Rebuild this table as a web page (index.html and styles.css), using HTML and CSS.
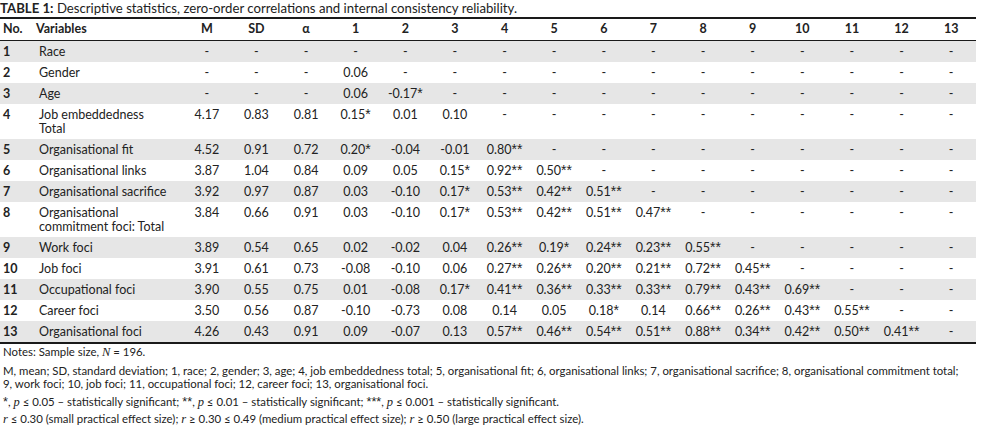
FILE: index.html
```html
<!DOCTYPE html>
<html lang="en">
<head>
<meta charset="utf-8">
<title>Table 1</title>
<link rel="stylesheet" href="styles.css">
</head>
<body>
<div class="page">
  <p class="caption"><b>TABLE 1:</b> Descriptive statistics, zero-order correlations and internal consistency reliability.</p>
  <table class="stats">
    <colgroup>
      <col class="c-no"><col class="c-var">
      <col class="c-num"><col class="c-num"><col class="c-num">
      <col class="c-num"><col class="c-num"><col class="c-num"><col class="c-num"><col class="c-num"><col class="c-num"><col class="c-num"><col class="c-num"><col class="c-num"><col class="c-num"><col class="c-num"><col class="c-num"><col class="c-num">
    </colgroup>
    <thead>
      <tr><th class="l">No.</th><th class="l">Variables</th><th>M</th><th>SD</th><th>α</th><th>1</th><th>2</th><th>3</th><th>4</th><th>5</th><th>6</th><th>7</th><th>8</th><th>9</th><th>10</th><th>11</th><th>12</th><th>13</th></tr>
    </thead>
    <tbody>
      <tr class="sh"><td class="no">1</td><td class="var">Race</td><td>-</td><td>-</td><td>-</td><td>-</td><td>-</td><td>-</td><td>-</td><td>-</td><td>-</td><td>-</td><td>-</td><td>-</td><td>-</td><td>-</td><td>-</td><td>-</td></tr>
      <tr><td class="no">2</td><td class="var">Gender</td><td>-</td><td>-</td><td>-</td><td>0.06</td><td>-</td><td>-</td><td>-</td><td>-</td><td>-</td><td>-</td><td>-</td><td>-</td><td>-</td><td>-</td><td>-</td><td>-</td></tr>
      <tr class="sh"><td class="no">3</td><td class="var">Age</td><td>-</td><td>-</td><td>-</td><td>0.06</td><td>-0.17<span class="s">*</span></td><td>-</td><td>-</td><td>-</td><td>-</td><td>-</td><td>-</td><td>-</td><td>-</td><td>-</td><td>-</td><td>-</td></tr>
      <tr><td class="no">4</td><td class="var">Job embeddedness<br>Total</td><td>4.17</td><td>0.83</td><td>0.81</td><td>0.15<span class="s">*</span></td><td>0.01</td><td>0.10</td><td>-</td><td>-</td><td>-</td><td>-</td><td>-</td><td>-</td><td>-</td><td>-</td><td>-</td><td>-</td></tr>
      <tr class="sh"><td class="no">5</td><td class="var">Organisational fit</td><td>4.52</td><td>0.91</td><td>0.72</td><td>0.20<span class="s">*</span></td><td>-0.04</td><td>-0.01</td><td>0.80<span class="s">**</span></td><td>-</td><td>-</td><td>-</td><td>-</td><td>-</td><td>-</td><td>-</td><td>-</td><td>-</td></tr>
      <tr><td class="no">6</td><td class="var">Organisational links</td><td>3.87</td><td>1.04</td><td>0.84</td><td>0.09</td><td>0.05</td><td>0.15<span class="s">*</span></td><td>0.92<span class="s">**</span></td><td>0.50<span class="s">**</span></td><td>-</td><td>-</td><td>-</td><td>-</td><td>-</td><td>-</td><td>-</td><td>-</td></tr>
      <tr class="sh"><td class="no">7</td><td class="var">Organisational sacrifice</td><td>3.92</td><td>0.97</td><td>0.87</td><td>0.03</td><td>-0.10</td><td>0.17<span class="s">*</span></td><td>0.53<span class="s">**</span></td><td>0.42<span class="s">**</span></td><td>0.51<span class="s">**</span></td><td>-</td><td>-</td><td>-</td><td>-</td><td>-</td><td>-</td><td>-</td></tr>
      <tr><td class="no">8</td><td class="var">Organisational<br>commitment foci: Total</td><td>3.84</td><td>0.66</td><td>0.91</td><td>0.03</td><td>-0.10</td><td>0.17<span class="s">*</span></td><td>0.53<span class="s">**</span></td><td>0.42<span class="s">**</span></td><td>0.51<span class="s">**</span></td><td>0.47<span class="s">**</span></td><td>-</td><td>-</td><td>-</td><td>-</td><td>-</td><td>-</td></tr>
      <tr class="sh"><td class="no">9</td><td class="var">Work foci</td><td>3.89</td><td>0.54</td><td>0.65</td><td>0.02</td><td>-0.02</td><td>0.04</td><td>0.26<span class="s">**</span></td><td>0.19<span class="s">*</span></td><td>0.24<span class="s">**</span></td><td>0.23<span class="s">**</span></td><td>0.55<span class="s">**</span></td><td>-</td><td>-</td><td>-</td><td>-</td><td>-</td></tr>
      <tr><td class="no">10</td><td class="var">Job foci</td><td>3.91</td><td>0.61</td><td>0.73</td><td>-0.08</td><td>-0.10</td><td>0.06</td><td>0.27<span class="s">**</span></td><td>0.26<span class="s">**</span></td><td>0.20<span class="s">**</span></td><td>0.21<span class="s">**</span></td><td>0.72<span class="s">**</span></td><td>0.45<span class="s">**</span></td><td>-</td><td>-</td><td>-</td><td>-</td></tr>
      <tr class="sh"><td class="no">11</td><td class="var">Occupational foci</td><td>3.90</td><td>0.55</td><td>0.75</td><td>0.01</td><td>-0.08</td><td>0.17<span class="s">*</span></td><td>0.41<span class="s">**</span></td><td>0.36<span class="s">**</span></td><td>0.33<span class="s">**</span></td><td>0.33<span class="s">**</span></td><td>0.79<span class="s">**</span></td><td>0.43<span class="s">**</span></td><td>0.69<span class="s">**</span></td><td>-</td><td>-</td><td>-</td></tr>
      <tr><td class="no">12</td><td class="var">Career foci</td><td>3.50</td><td>0.56</td><td>0.87</td><td>-0.10</td><td>-0.73</td><td>0.08</td><td>0.14</td><td>0.05</td><td>0.18<span class="s">*</span></td><td>0.14</td><td>0.66<span class="s">**</span></td><td>0.26<span class="s">**</span></td><td>0.43<span class="s">**</span></td><td>0.55<span class="s">**</span></td><td>-</td><td>-</td></tr>
      <tr class="sh"><td class="no">13</td><td class="var">Organisational foci</td><td>4.26</td><td>0.43</td><td>0.91</td><td>0.09</td><td>-0.07</td><td>0.13</td><td>0.57<span class="s">**</span></td><td>0.46<span class="s">**</span></td><td>0.54<span class="s">**</span></td><td>0.51<span class="s">**</span></td><td>0.88<span class="s">**</span></td><td>0.34<span class="s">**</span></td><td>0.42<span class="s">**</span></td><td>0.50<span class="s">**</span></td><td>0.41<span class="s">**</span></td><td>-</td></tr>
    </tbody>
  </table>
  <div class="notes">
    <p class="first">Notes: Sample size, <i>N</i> = 196.</p>
    <p>M, mean; SD, standard deviation; 1, race; 2, gender; 3, age; 4, job embeddedness total; 5, organisational fit; 6, organisational links; 7, organisational sacrifice; 8, organisational commitment total;<br>9, work foci; 10, job foci; 11, occupational foci; 12, career foci; 13, organisational foci.</p>
    <p><span class="s">*</span>, <i>p</i> ≤ 0.05 – statistically significant; <span class="s">**</span>, <i>p</i> ≤ 0.01 – statistically significant; <span class="s">***</span>, <i>p</i> ≤ 0.001 – statistically significant.</p>
    <p><i>r</i> ≤ 0.30 (small practical effect size); <i>r</i> ≥ 0.30 ≤ 0.49 (medium practical effect size); <i>r</i> ≥ 0.50 (large practical effect size).</p>
  </div>
</div>
</body>
</html>
```
FILE: styles.css
```css
html, body {
  margin: 0;
  padding: 0;
  background: #ffffff;
}
body {
  font-family: Lato, "Liberation Sans", sans-serif;
  color: #222222;
  font-size: 12.5px;
}
.page {
  width: 976px;
}
.caption {
  margin: 0;
  height: 17px;
  line-height: 17px;
  font-size: 13.2px;
}
.caption b {
  font-weight: 700;
}
.stats {
  width: 976px;
  border-collapse: collapse;
  table-layout: fixed;
  border-top: 2px solid #1a1a1a;
  border-bottom: 2px solid #1a1a1a;
}
.c-no { width: 36px; }
.c-var { width: 146px; }
.c-num { width: 49.625px; }
.stats th {
  font-weight: 700;
  text-align: center;
  line-height: 14px;
  padding: 3px 0 4px;
  border-bottom: 1px solid #1a1a1a;
}
.stats th.l {
  text-align: left;
}
.stats th:first-child {
  padding-left: 3px;
}
.stats td {
  text-align: center;
  vertical-align: top;
  line-height: 14px;
  padding: 3.5px 0;
  white-space: nowrap;
}
.stats td.no {
  text-align: left;
  padding-left: 3px;
  font-weight: 700;
}
.stats td.var {
  text-align: left;
  padding-left: 3px;
}
.stats tr.sh td {
  background: #e6e6e6;
}
.s {
  font-family: "Liberation Sans", sans-serif;
  font-size: 1.12em;
  line-height: 0;
}
.notes {
  padding: 1px 0 0 3px;
  font-size: 11.4px;
  line-height: 13.5px;
}
.notes p {
  margin: 0 0 4px;
}
.notes p.first {
  margin-bottom: 5px;
}
.notes i {
  font-family: "Liberation Serif", serif;
  font-size: 12.5px;
  line-height: 0;
}
```
